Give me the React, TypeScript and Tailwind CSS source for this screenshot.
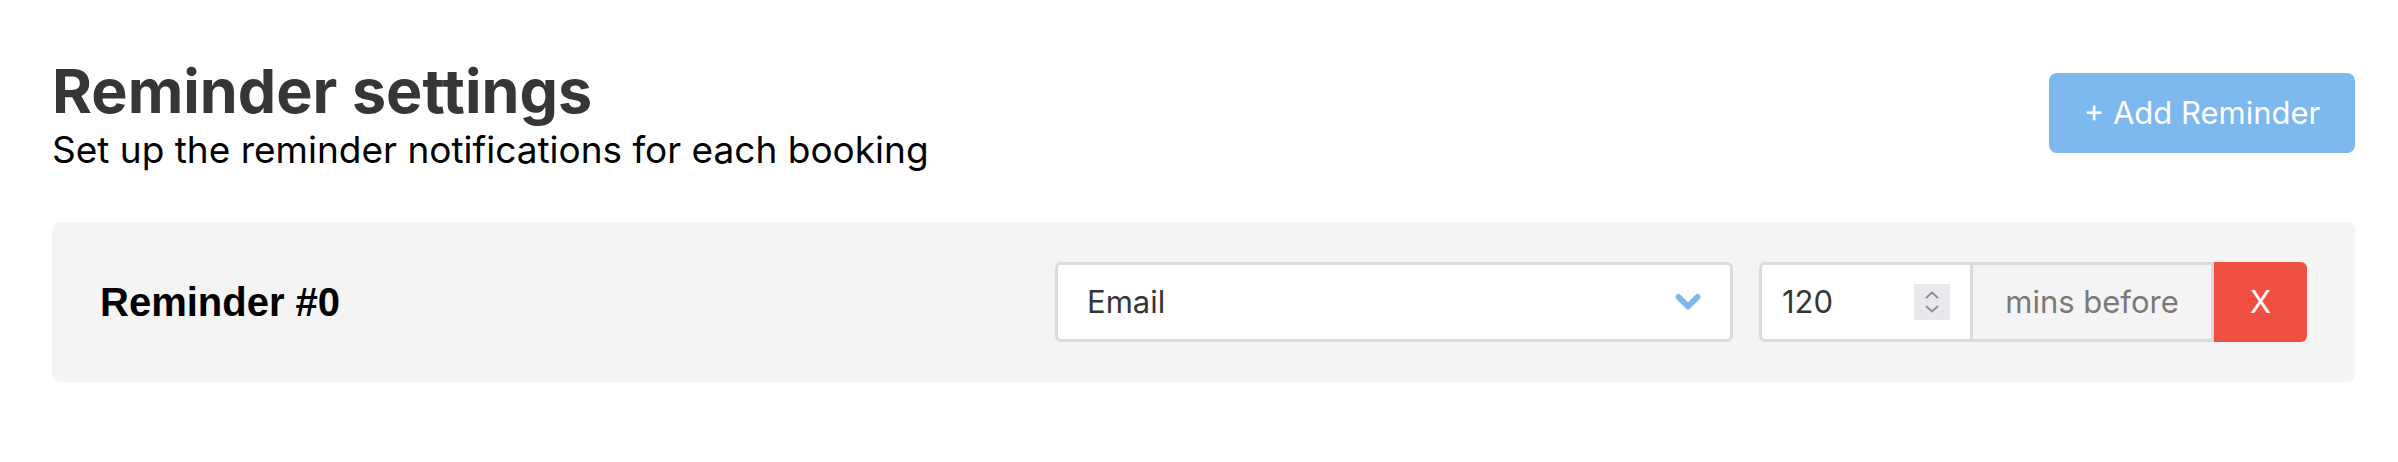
import { useState } from "react";

const Chevron = () => (
  <svg width="26" height="18" viewBox="0 0 26 18" fill="none">
    <path
      d="M3.5 4 L13 13.5 L22.5 4"
      stroke="#7db8ee"
      strokeWidth="6"
      strokeLinecap="round"
      strokeLinejoin="round"
    />
  </svg>
);

const Spinner = () => (
  <div className="flex h-[36px] w-[36px] flex-col items-center justify-center gap-[6px] bg-[#e8e8ed]">
    <svg width="14" height="8" viewBox="0 0 14 8" fill="none">
      <path d="M1.5 6.5 L7 1.5 L12.5 6.5" stroke="#8e8e99" strokeWidth="2" strokeLinecap="round" />
    </svg>
    <svg width="14" height="8" viewBox="0 0 14 8" fill="none">
      <path d="M1.5 1.5 L7 6.5 L12.5 1.5" stroke="#8e8e99" strokeWidth="2" strokeLinecap="round" />
    </svg>
  </div>
);

const App = () => {
  const [mins] = useState(120);

  return (
    <div className="min-h-[462px] bg-white pl-[52px] pr-[43px] pt-[59px] font-['Inter',sans-serif]">
      <div className="flex items-start justify-between">
        <div>
          <h1 className="text-[61px] font-bold leading-[64px] text-[#363636]">
            Reminder settings
          </h1>
          <p className="text-[37px] leading-[54px] text-black">
            Set up the reminder notifications for each booking
          </p>
        </div>
        <button className="mt-[14px] h-[80px] w-[306px] rounded-[8px] bg-[#7db8ee] text-[31px] text-white">
          + Add Reminder
        </button>
      </div>

      <div className="mt-[45px] flex items-center justify-between rounded-[8px] bg-[#f4f4f4] px-12 py-10">
        <span className="font-['Liberation_Sans',sans-serif] text-[40px] font-bold text-black">
          Reminder #0
        </span>

        <div className="flex items-center gap-[26px]">
          <div className="flex h-20 w-[678px] items-center justify-between rounded-[6px] border-[3px] border-[#dbdbdb] bg-white pl-[29px] pr-[29px]">
            <span className="text-[31px] text-[#363636]">Email</span>
            <Chevron />
          </div>

          <div className="flex h-20">
            <div className="flex w-[214px] items-center justify-between rounded-l-[6px] border-[3px] border-[#dbdbdb] bg-white pl-[20px] pr-[20px]">
              <span className="text-[31px] text-[#363636]">{mins}</span>
              <Spinner />
            </div>
            <div className="flex w-[241px] items-center justify-center border-y-[3px] border-r-[3px] border-[#dbdbdb] bg-[#f4f4f4] text-[31px] text-[#7a7a7a]">
              mins before
            </div>
            <button className="w-[93px] rounded-r-[6px] bg-[#f04f43] text-[31px] text-white">
              X
            </button>
          </div>
        </div>
      </div>
    </div>
  );
};

export default App;
